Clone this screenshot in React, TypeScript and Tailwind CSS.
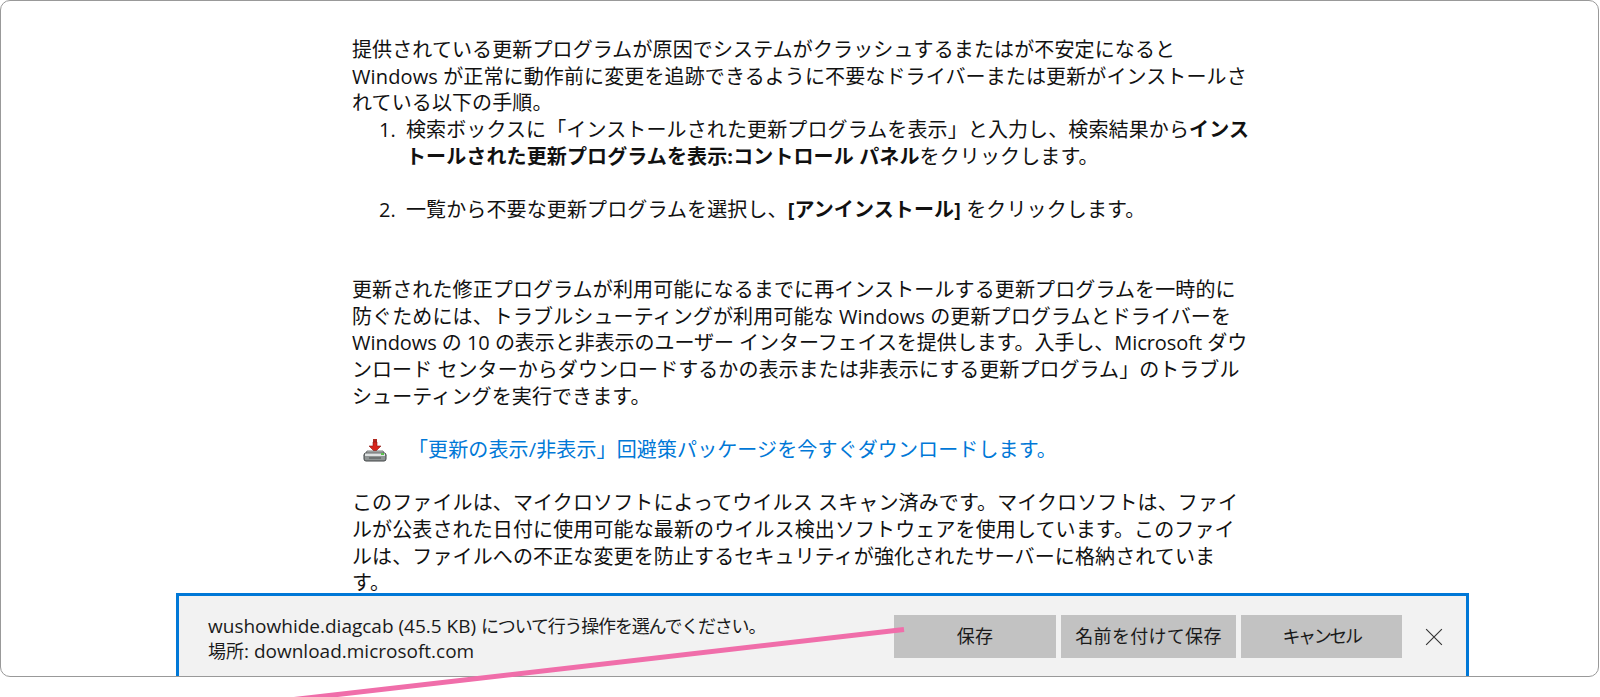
const font = "font-['Open_Sans','Noto_Sans_CJK_JP',sans-serif]";

const DownloadIcon = () => (
    <svg width="24" height="24" viewBox="0 0 24 24" className="shrink-0">
        <rect x="10" y="1" width="4" height="3" fill="#b02a20" />
        <path d="M10 4h4v4h4l-6 6-6-6h4z" fill="#d8261c" stroke="#8c1a14" strokeWidth="0.6" />
        <path d="M4 13h16l3 5H1z" fill="#c9cdcc" stroke="#55595a" strokeWidth="0.8" />
        <rect x="1" y="15" width="22" height="8" rx="2" fill="#8f9494" stroke="#3f4344" strokeWidth="1" />
        <rect x="2" y="15.5" width="20" height="2.5" fill="#dfe2e2" />
        <rect x="6" y="19.5" width="12" height="1" fill="#4c5051" />
        <rect x="18" y="15" width="3" height="2" fill="#58c04a" />
    </svg>
);

const BarButton = ({ label, width, tight }: { label: string; width: string; tight?: boolean }) => (
    <button
        className={`${width} h-[43px] bg-[#c2c2c2] text-[18px] text-[#1a1a1a] flex items-center justify-center ${
            tight ? "tracking-[-2.4px]" : "tracking-[0.3px]"
        }`}
    >
        {label}
    </button>
);

const App = () => {
    return (
        <div className={`${font} relative w-full h-[697px] bg-white overflow-hidden text-[#111]`}>
            <div className="relative w-[1599px] h-[677px] border border-[#999] rounded-[10px] overflow-hidden bg-white">
                <div className="ml-[351px] pt-[36px] w-[900px] text-[20px] leading-[26.67px] tracking-[0.12px] whitespace-nowrap">
                    <p>
                        提供されている更新プログラムが原因でシステムがクラッシュするまたはが不安定になると
                        <br />
                        Windows が正常に動作前に変更を追跡できるように不要なドライバーまたは更新がインストールさ
                        <br />
                        れている以下の手順。
                    </p>
                    <ol>
                        <li className="flex">
                            <span className="w-[54px] pr-[10px] text-right">1.</span>
                            <span>
                                検索ボックスに「インストールされた更新プログラムを表示」と入力し、検索結果から<b>インス</b>
                                <br />
                                <b>トールされた更新プログラムを表示:コントロール パネル</b>をクリックします。
                            </span>
                        </li>
                        <li className="flex mt-[26.67px]">
                            <span className="w-[54px] pr-[10px] text-right">2.</span>
                            <span>
                                一覧から不要な更新プログラムを選択し、<b>[アンインストール]</b> をクリックします。
                            </span>
                        </li>
                    </ol>
                    <p className="mt-[53.34px]">
                        更新された修正プログラムが利用可能になるまでに再インストールする更新プログラムを一時的に
                        <br />
                        防ぐためには、トラブルシューティングが利用可能な Windows の更新プログラムとドライバーを
                        <br />
                        <span className="tracking-[-0.05px]">Windows の 10 の表示と非表示のユーザー インターフェイスを提供します。入手し、Microsoft ダウ</span>
                        <br />
                        <span className="tracking-[0.06px]">ンロード センターからダウンロードするかの表示または非表示にする更新プログラム」のトラブル</span>
                        <br />
                        シューティングを実行できます。
                    </p>
                    <div className="flex items-center mt-[26.67px] pl-[11px] gap-[21px]">
                        <DownloadIcon />
                        <a className="text-[#0078d7]">「更新の表示/非表示」回避策パッケージを今すぐダウンロードします。</a>
                    </div>
                    <p className="mt-[26.67px]">
                        このファイルは、マイクロソフトによってウイルス スキャン済みです。マイクロソフトは、ファイ
                        <br />
                        ルが公表された日付に使用可能な最新のウイルス検出ソフトウェアを使用しています。このファイ
                        <br />
                        ルは、ファイルへの不正な変更を防止するセキュリティが強化されたサーバーに格納されていま
                        <br />
                        す。
                    </p>
                </div>

                <div className="absolute left-[175px] top-[592px] w-[1293px] h-[100px] bg-[#f2f2f2] border-[3px] border-[#0078d7] flex items-start pl-[29px] pr-[23px] pt-[19px]">
                    <div className="flex-1 -mt-[1px] text-[19px] leading-[25px] whitespace-nowrap text-[#1a1a1a]">
                        wushowhide.diagcab (45.5 KB) <span className="text-[18px] tracking-[-1.2px]">について行う操作を選んでください。</span>
                        <br />
                        <span className="text-[18px]">場所</span>: download.microsoft.com
                    </div>
                    <div className="flex items-center gap-[5px]">
                        <BarButton label="保存" width="w-[162px]" />
                        <BarButton label="名前を付けて保存" width="w-[175px]" />
                        <BarButton label="キャンセル" width="w-[161px]" tight />
                    </div>
                    <svg width="18" height="18" viewBox="0 0 16 16" className="ml-[23px] mt-[13px] shrink-0">
                        <path d="M1 1l14 14M15 1L1 15" stroke="#333" strokeWidth="1" fill="none" />
                    </svg>
                </div>
            </div>

            <svg width="1600" height="697" className="absolute inset-0 pointer-events-none">
                <line x1="904" y1="629.5" x2="260" y2="703.4" stroke="#f06eaa" strokeWidth="5" />
            </svg>
        </div>
    );
};

export default App;
